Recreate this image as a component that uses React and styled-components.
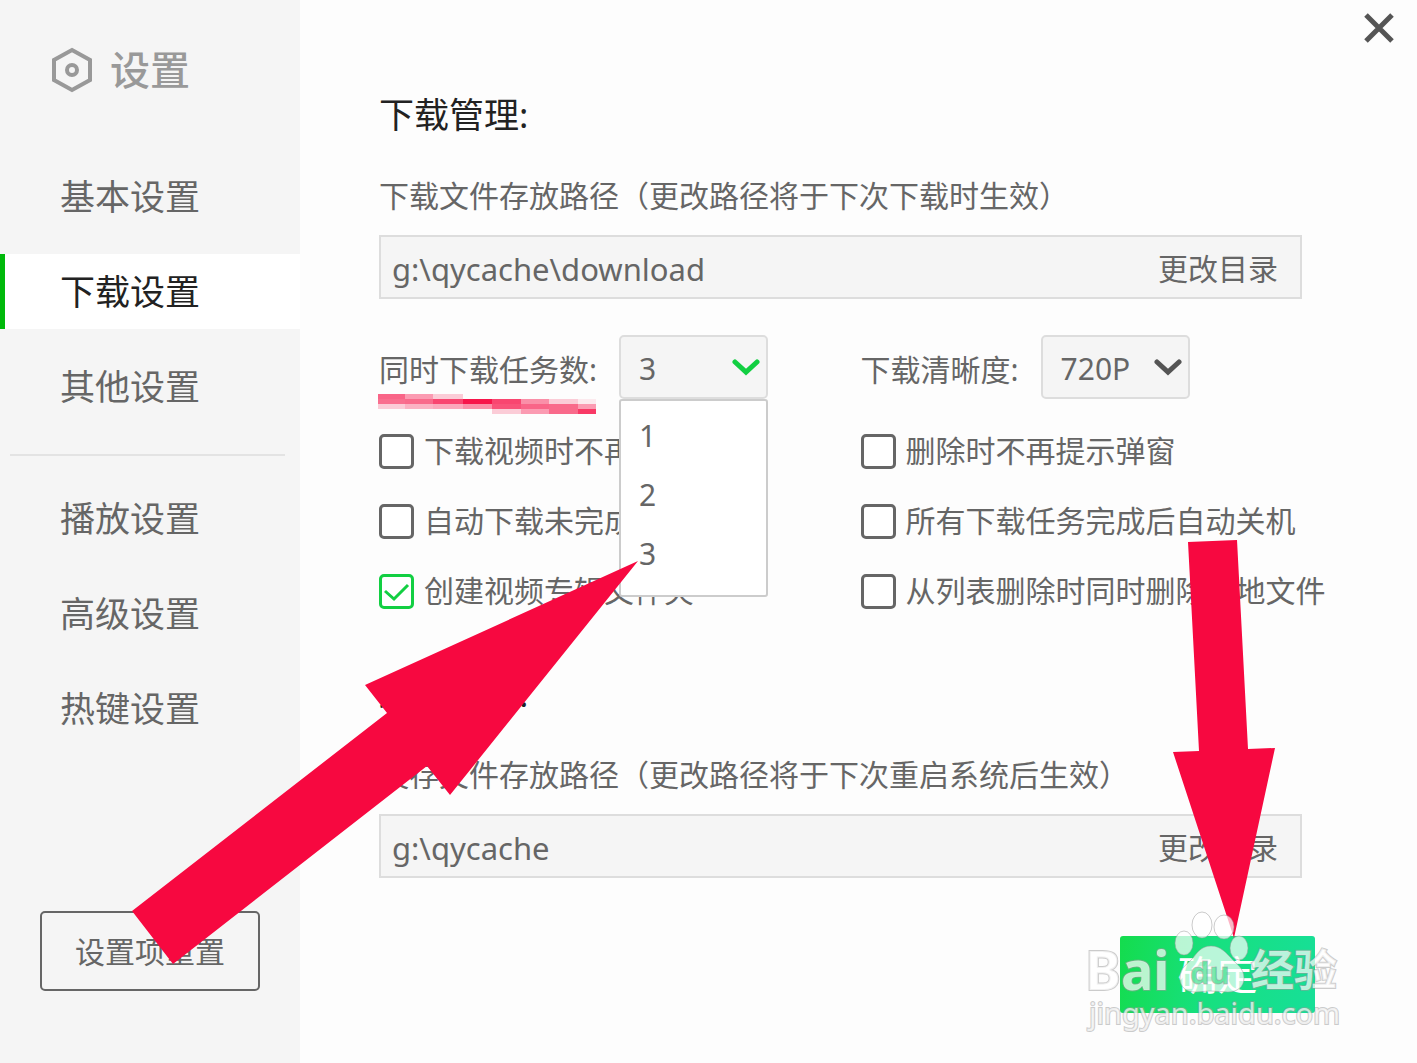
import styled, { createGlobalStyle, css } from 'styled-components';

const GlobalStyle = createGlobalStyle`
  * {
    box-sizing: border-box;
  }
  body {
    margin: 0;
    background: #fdfdfd;
    color: #666;
    font-family: 'Noto Sans', 'Noto Sans CJK SC', sans-serif;
    font-size: 30px;
    line-height: 40px;
  }
  button, select, input {
    font: inherit;
    color: inherit;
  }
`;

const Window = styled.div`
  position: relative;
  display: grid;
  grid-template-columns: 300px minmax(0, 1fr);
  min-height: 100vh;
  overflow: hidden;
`;

const Sidebar = styled.aside`
  display: flex;
  flex-direction: column;
  background: #f5f5f5;
`;
const Brand = styled.h1`
  display: flex;
  align-items: center;
  gap: 16px;
  margin: 40px 0 59px;
  padding-left: 50px;
  color: #999;
  font-size: 40px;
  font-weight: 500;
  line-height: 60px;
`;
const Nav = styled.nav`
  display: flex;
  flex-direction: column;
  gap: 20px;
`;
const NavLink = styled.a`
  padding-left: 55px;
  border-left: 5px solid transparent;
  color: #666;
  font-size: 35px;
  line-height: 75px;
  text-decoration: none;
  ${props => props.$active && css`
    border-left-color: #00b90b;
    background: #fff;
    color: #222;
  `}
`;
const Divider = styled.hr`
  width: 275px;
  height: 2px;
  margin: 10px 0 5px 10px;
  border: 0;
  background: #e3e3e3;
`;
const ResetButton = styled.button`
  height: 80px;
  margin: auto 40px 72px;
  padding: 2px 0 0;
  border: 2px solid #666;
  border-radius: 5px;
  background: transparent;
`;

const Main = styled.main`
  display: flex;
  flex-direction: column;
  padding-left: 79px;
`;
const TopBar = styled.div`
  display: flex;
  justify-content: flex-end;
  padding: 8px 18px;
`;
const CloseButton = styled.button`
  display: flex;
  padding: 0;
  border: 0;
  background: none;
`;
const Section = styled.section`
  margin: 34px 115px 24px 0;
`;
const SectionTitle = styled.h2`
  margin: 0 0 36px;
  color: #222;
  font-size: 35px;
  font-weight: 400;
  line-height: 50px;
`;
const FieldLabel = styled.label`
  display: block;
  margin-bottom: 19px;
  white-space: nowrap;
`;
const PathBox = styled.div`
  display: flex;
  align-items: center;
  height: 64px;
  padding: 3px 22px 0 11px;
  border: 2px solid #ddd;
  background: #f5f5f5;
`;
const PathInput = styled.input`
  flex: 1;
  min-width: 0;
  padding: 0;
  border: 0;
  outline: 0;
  background: none;
  font-size: 31px;
`;
const ChangeButton = styled.button`
  padding: 0;
  border: 0;
  background: none;
`;

const Options = styled.div`
  display: grid;
  grid-template-columns: minmax(0, 12fr) minmax(0, 11fr);
  row-gap: 30px;
  margin-top: 36px;
`;
const SelectRow = styled.div`
  display: flex;
  align-items: center;
  gap: 22px;
  padding-bottom: 2px;
  white-space: nowrap;
`;
const SelectLabel = styled.label`
  padding-top: 6px;
`;
const SelectBox = styled.div`
  position: relative;
  width: 149px;
`;
const Select = styled.select`
  display: block;
  width: 100%;
  height: 64px;
  padding: 3px 18px 0;
  border: 2px solid #ddd;
  border-radius: 5px;
  background: #f5f5f5;
  appearance: none;
`;
const Chevron = styled.svg`
  position: absolute;
  top: 22px;
  right: 8px;
  pointer-events: none;
`;
const Menu = styled.ul`
  position: absolute;
  z-index: 1;
  top: 64px;
  left: 0;
  width: 100%;
  height: 198px;
  margin: 0;
  padding: 5px 18px;
  border: 2px solid #ccc;
  border-radius: 3px;
  background: #fff;
  list-style: none;
  line-height: 59px;
`;
const CheckLabel = styled.label`
  display: flex;
  align-items: center;
  gap: 10px;
  height: 40px;
  white-space: nowrap;
`;
const Checkbox = styled.input`
  flex: none;
  width: 35px;
  height: 35px;
  margin: 0;
  border: 3px solid #666;
  border-radius: 5px;
  background: #fff;
  appearance: none;
  &:checked {
    border-color: #12cf42;
    background: #fff url("data:image/svg+xml,%3Csvg xmlns='http://www.w3.org/2000/svg' viewBox='0 0 29 29'%3E%3Cpath d='M3 14l9 8L26 8' fill='none' stroke='%2312cf42' stroke-width='3'/%3E%3C/svg%3E") center / 100%;
  }
`;
const Footer = styled.footer`
  display: flex;
  justify-content: flex-end;
  margin-top: 34px;
  padding: 0 102px 50px 0;
`;
const OkButton = styled.button`
  width: 195px;
  height: 77px;
  padding: 0;
  border: 0;
  border-radius: 3px;
  background: linear-gradient(100deg, #14dc4d, #17e07f 45%, #17df98);
  color: #fff;
  font-size: 40px;
`;

const Overlay = styled.svg`
  position: absolute;
  z-index: 2;
  top: 0;
  left: 0;
  pointer-events: none;
`;

const navGroups = [
  ['基本设置', '下载设置', '其他设置'],
  ['播放设置', '高级设置', '热键设置'],
];

const checks = [
  ['下载视频时不再提示', false],
  ['删除时不再提示弹窗', false],
  ['自动下载未完成任务', false],
  ['所有下载任务完成后自动关机', false],
  ['创建视频专辑文件夹', true],
  ['从列表删除时同时删除本地文件', false],
];

// [x, width, opacity of each 5px row]
const strokeBlocks = [
  [378, 27, [0.62, 0.58, 0.2, 0]],
  [405, 28, [0.4, 0.6, 0.3, 0]],
  [433, 30, [0.2, 0.75, 0.35, 0]],
  [463, 29, [0, 0.95, 0.45, 0]],
  [492, 29, [0, 0.75, 0.7, 0.2]],
  [521, 28, [0, 0.45, 0.62, 0.4]],
  [549, 29, [0, 0.2, 0.6, 0.6]],
  [578, 18, [0, 0.08, 0.4, 0.8]],
];

function PathField({ id, label, value }) {
  return (
    <>
      <FieldLabel htmlFor={id}>{label}</FieldLabel>
      <PathBox>
        <PathInput id={id} defaultValue={value} />
        <ChangeButton type="button">更改目录</ChangeButton>
      </PathBox>
    </>
  );
}

function SelectField({ id, label, value, options, color, open }) {
  return (
    <SelectRow>
      <SelectLabel htmlFor={id}>{label}</SelectLabel>
      <SelectBox>
        <Select id={id} defaultValue={value}>
          {options.map(option => <option key={option}>{option}</option>)}
        </Select>
        <Chevron width="28" height="20" viewBox="0 0 28 20" fill="none" stroke={color} strokeWidth="5">
          <path d="M3 5l11 10L25 5" strokeLinecap="round" />
        </Chevron>
        {open && (
          <Menu>
            {options.map(option => <li key={option}>{option}</li>)}
          </Menu>
        )}
      </SelectBox>
    </SelectRow>
  );
}

function Marks() {
  return (
    <Overlay width="1417" height="1063" viewBox="0 0 1417 1063" aria-hidden="true">
      <g fill="#f70840">
        {strokeBlocks.map(([x, width, rows]) => rows.map((opacity, i) => (
          <rect key={`${x}-${i}`} x={x} y={394 + i * 5} width={width} height="5" opacity={opacity} />
        )))}
        <path d="M638 561L450 795L427 766L173 964L132 911L387 713L365 685Z" />
        <path d="M1188 542L1237 540L1248 749L1275 748L1234 938L1173 752L1199 751Z" />
      </g>
    </Overlay>
  );
}

function Watermark() {
  return (
    <Overlay width="1417" height="1063" viewBox="0 0 1417 1063" aria-hidden="true">
      <g fill="#fff" fillOpacity="0.7" stroke="#999" strokeOpacity="0.5">
        <ellipse cx="1184" cy="943" rx="9" ry="12" />
        <ellipse cx="1202" cy="925" rx="10" ry="13" />
        <ellipse cx="1224" cy="927" rx="10" ry="12" />
        <ellipse cx="1239" cy="948" rx="9" ry="12" />
        <path d="M1211 946c-10 0-14 7-18 12c-5 6-13 9-13 20c0 9 6 14 15 14c6 0 10-1 16-1s11 1 17 1c9 0 16-5 16-14c0-10-8-14-13-20c-5-5-10-12-20-12z" />
        <g fontWeight="700" paintOrder="stroke" strokeWidth="2">
          <text x="1085" y="990" fontSize="54" fontFamily="'Noto Sans', sans-serif">Bai</text>
          <text x="1251" y="986" fontSize="43" fontFamily="'Noto Sans CJK SC', sans-serif">经验</text>
        </g>
        <text x="1190" y="984" fontSize="31" fontWeight="700" fontFamily="'Noto Sans', sans-serif" fill="#3fdf8c">du</text>
        <text x="1089" y="1024" fontSize="29" fontFamily="'Noto Sans', sans-serif" paintOrder="stroke" strokeWidth="2">jingyan.baidu.com</text>
      </g>
    </Overlay>
  );
}

function App() {
  return (
    <Window>
      <GlobalStyle />
      <Sidebar>
        <Brand>
          <svg width="44" height="46" viewBox="0 0 44 46" fill="none" stroke="#999" strokeWidth="4">
            <path d="M22 3L40 13V33L22 43L4 33V13Z" />
            <circle cx="22" cy="23" r="5" />
          </svg>
          设置
        </Brand>
        <Nav>
          {navGroups[0].map(name => (
            <NavLink key={name} href="#" $active={name === '下载设置'}>{name}</NavLink>
          ))}
          <Divider />
          {navGroups[1].map(name => <NavLink key={name} href="#">{name}</NavLink>)}
        </Nav>
        <ResetButton type="button">设置项重置</ResetButton>
      </Sidebar>
      <Main>
        <TopBar>
          <CloseButton type="button" aria-label="关闭">
            <svg width="40" height="40" viewBox="0 0 40 40" stroke="#555" strokeWidth="5">
              <path d="M7 7L33 33M33 7L7 33" />
            </svg>
          </CloseButton>
        </TopBar>
        <Section>
          <SectionTitle>下载管理:</SectionTitle>
          <PathField
            id="download-path"
            label="下载文件存放路径（更改路径将于下次下载时生效）"
            value="g:\qycache\download"
          />
          <Options>
            <SelectField id="tasks" label="同时下载任务数:" value="3" options={['1', '2', '3']} color="#12cf42" open />
            <SelectField id="quality" label="下载清晰度:" value="720P" options={['720P', '1080P']} color="#555" />
            {checks.map(([text, checked]) => (
              <CheckLabel key={text}>
                <Checkbox type="checkbox" defaultChecked={checked} />
                {text}
              </CheckLabel>
            ))}
          </Options>
        </Section>
        <Section>
          <SectionTitle>缓存管理:</SectionTitle>
          <PathField
            id="cache-path"
            label="缓存文件存放路径（更改路径将于下次重启系统后生效）"
            value="g:\qycache"
          />
        </Section>
        <Footer>
          <OkButton type="button">确定</OkButton>
        </Footer>
      </Main>
      <Marks />
      <Watermark />
    </Window>
  );
}

export default App;
